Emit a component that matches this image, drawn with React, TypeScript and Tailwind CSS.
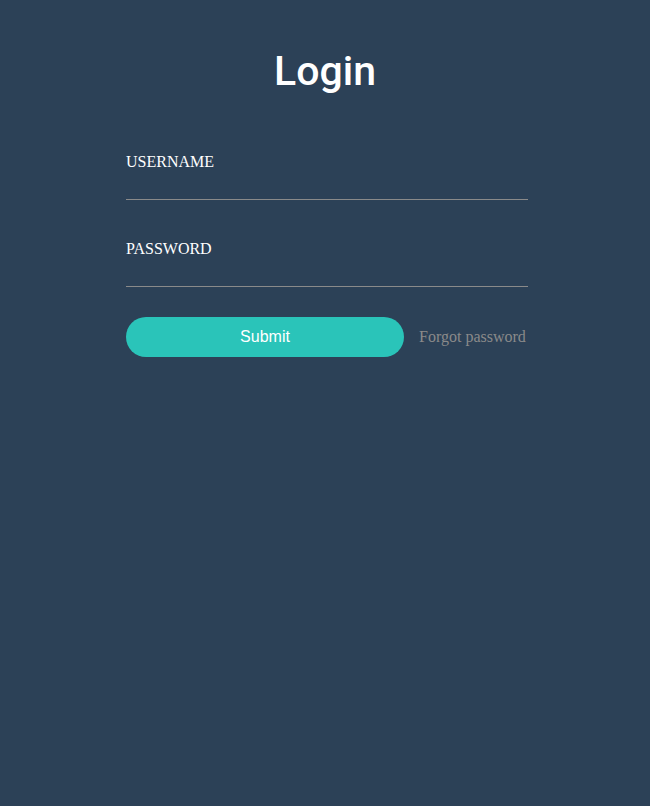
export default function App() {
  return (
    <div className="min-h-[806px] w-full bg-[#2c4157] flex flex-col items-center">
      <h1 className="mt-[45px] text-[41px] leading-[52px] text-white font-['Roboto',Arial,sans-serif] font-medium">
        Login
      </h1>
      <form className="w-[402px] mt-[55px] ml-[4px] font-['Liberation_Serif','Times_New_Roman',serif]">
        <label className="block">
          <span className="block text-white text-[16px] leading-[20px]">USERNAME</span>
          <input className="block w-full h-[28px] bg-transparent border-b border-[#8a8a8a] text-white outline-none" />
        </label>
        <label className="block mt-[39px]">
          <span className="block text-white text-[16px] leading-[20px]">PASSWORD</span>
          <input type="password" className="block w-full h-[28px] bg-transparent border-b border-[#8a8a8a] text-white outline-none" />
        </label>
        <div className="flex items-center mt-[30px]">
          <button
            type="button"
            className="w-[278px] h-[40px] rounded-[20px] bg-[#2ac4b9] text-white text-[16px] font-['Liberation_Sans',Arial,sans-serif]"
          >
            Submit
          </button>
          <a className="ml-[15px] text-[16px] text-[#8a8a8a] -mt-[1px]">Forgot password</a>
        </div>
      </form>
    </div>
  );
}
